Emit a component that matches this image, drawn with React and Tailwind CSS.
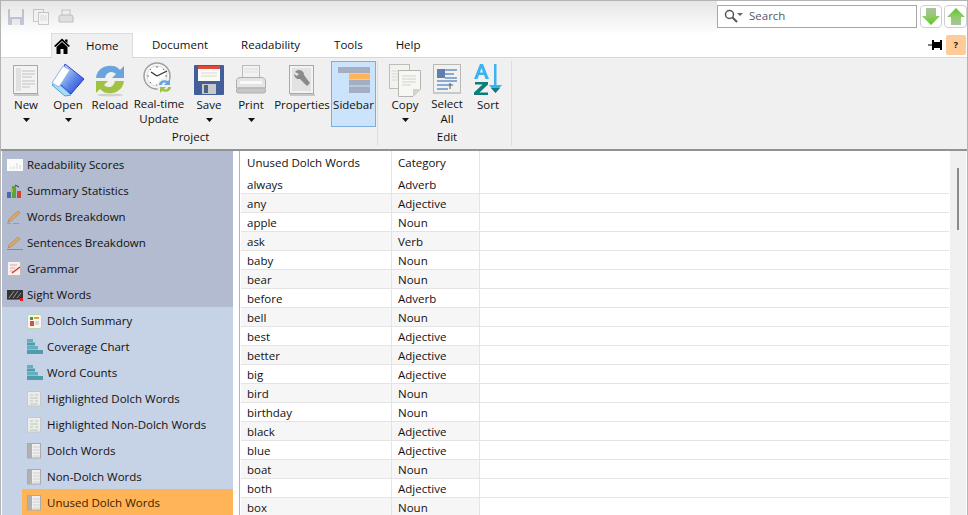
import React from 'react';

const font = { fontFamily: '"Open Sans", "Noto Sans", sans-serif' };

// ribbon icons
const PageIcon = ({ children }) => (
  <svg width="34" height="34" viewBox="0 0 34 34">
    <rect x="4.5" y="2.5" width="24" height="28" fill="#f3f3f1" stroke="#a9a9a5" />
    <rect x="5" y="31" width="25" height="2" fill="#c8c8c8" />
    {children}
  </svg>
);

const NewIcon = () => (
  <PageIcon>
    <rect x="7" y="5" width="5" height="23" fill="#e0e0e0" />
    <path d="M13 8h13M13 11h13M13 14h10M13 18h13M13 21h13M13 24h8" stroke="#dadada" strokeWidth="2" />
  </PageIcon>
);

const OpenIcon = () => (
  <svg width="34" height="34" viewBox="0 0 34 34">
    <defs>
      <linearGradient id="openBlue" x1="0" y1="0" x2="1" y2="1">
        <stop offset="0" stopColor="#e4eefc" />
        <stop offset="0.55" stopColor="#5a86e6" />
        <stop offset="1" stopColor="#1f35d0" />
      </linearGradient>
    </defs>
    <path d="M1 22 L14 33 L20 32 L6 19 Z" fill="#a9dcf5" stroke="#4aa0e0" />
    <path d="M14 1 L33 16 L20 31 L9 21 Z" fill="url(#openBlue)" stroke="#2a3bd0" />
    <path d="M1 20 L12 3 L19 7 L8 24 Z" fill="#fff" stroke="#8ab8ea" />
  </svg>
);

const ReloadIcon = () => (
  <svg width="34" height="34" viewBox="0 0 34 34">
    <path d="M3 15 C4 6 12 2 19 3 C23 3 25 5 27 7 L31 3 V15 H19 L23 11 C19 7 13 9 12 15 Z" fill="#6aa4dc" />
    <path d="M3 18 H15 L11 22 C15 26 21 24 22 18 H31 C30 27 22 31 15 30 C11 30 9 28 7 26 L3 30 Z" fill="#a0c242" />
    <ellipse cx="17" cy="32" rx="13" ry="1.5" fill="#d0d0d0" />
  </svg>
);

const ClockIcon = () => (
  <svg width="34" height="34" viewBox="0 0 34 34">
    <circle cx="15" cy="14" r="13" fill="#f7f7f7" stroke="#a0a0a0" strokeWidth="1.5" />
    <circle cx="15" cy="14" r="10" fill="#fff" stroke="#dadada" />
    <path d="M15 14 L9 10 M15 14 L25 9" stroke="#333" strokeWidth="1.3" />
    <path d="M15 4v2M15 22v2M5 14h2M23 14h2M8 7l1 1M22 7l-1 1M8 21l1-1" stroke="#777" />
    <circle cx="23" cy="24" r="8" fill="#f0f0f0" />
    <path d="M17 23 C17 19 22 17 26 19 L28 17 V23 H22 L24 21 C22 20 20 21 20 23 Z" fill="#6aa4dc" />
    <path d="M29 25 C29 29 24 31 20 29 L18 31 V25 H24 L22 27 C24 28 26 27 26 25 Z" fill="#a0c242" />
  </svg>
);

const SaveIcon = () => (
  <svg width="30" height="30" viewBox="0 0 30 30">
    <rect width="30" height="30" rx="1" fill="#425f9b" />
    <rect x="4" y="1" width="22" height="15" fill="#fbfbf3" />
    <rect x="4" y="1" width="22" height="3" fill="#e04a3c" />
    <path d="M7 8h16M7 11h16" stroke="#d8d8d0" />
    <rect x="8" y="19" width="14" height="10" fill="#c7c9cb" />
    <rect x="10" y="20" width="4" height="8" fill="#4e5f80" />
  </svg>
);

const PrintIcon = () => (
  <svg width="34" height="34" viewBox="0 0 34 34">
    <rect x="8.5" y="2.5" width="17" height="13" fill="#f2f2f2" stroke="#bbb" />
    <path d="M10 6h14M10 9h14" stroke="#dedede" />
    <path d="M2.5 18 Q2.5 14.5 7 14.5 H27 Q31.5 14.5 31.5 18 V25 H2.5 Z" fill="#e4e4e4" stroke="#aeaeae" />
    <rect x="2.5" y="25" width="29" height="5" rx="2" fill="#c6c6c6" stroke="#aeaeae" />
    <rect x="6" y="18" width="22" height="3" fill="#f9f9f9" />
  </svg>
);

const PropertiesIcon = () => (
  <PageIcon>
    <rect x="7" y="5" width="19" height="23" fill="#e2e2e2" />
    <path d="M10 9 A5 5 0 0 1 19 12 L25 20 L22 23 L15 16 A5 5 0 0 1 9 11 L12 13 L14 11 Z" fill="#8a8a8a" />
  </PageIcon>
);

const SidebarIcon = () => (
  <svg width="32" height="26" viewBox="0 0 32 26">
    <rect width="32" height="6" fill="#a4adc2" />
    <rect x="11" y="6.5" width="21" height="6" fill="#ffb557" />
    <rect x="11" y="13" width="21" height="5.5" fill="#a4adc2" />
    <rect x="11" y="19.5" width="21" height="6.5" fill="#a4adc2" />
  </svg>
);

const CopyIcon = () => (
  <svg width="34" height="34" viewBox="0 0 34 34">
    <rect x="1.5" y="1.5" width="20" height="24" fill="#f2f2ee" stroke="#bcbcb8" />
    <path d="M4 8h15M4 11h15M4 14h15M4 17h10" stroke="#dadad6" />
    <path d="M10.5 7.5 H32.5 V26 L25 33.5 H10.5 Z" fill="#f7f7f3" stroke="#b4b4b0" />
    <path d="M25 33 L25 26 H32 Z" fill="#d2d2ce" />
    <path d="M14 13h14M14 16h14M14 19h14M14 22h9" stroke="#cfcfcb" />
  </svg>
);

const SelectAllIcon = () => (
  <svg width="28" height="30" viewBox="0 0 28 30">
    <rect x="0.5" y="0.5" width="27" height="28" fill="#f1f1ee" stroke="#b8b8b4" />
    <rect y="28" width="28" height="2" fill="#c8c8c8" />
    <rect x="4" y="5" width="8" height="9" fill="#5f7fb2" />
    <path d="M12 6h12M12 10h9M12 14h12M4 17h20M4 21h16M4 25h11" stroke="#8ba9d2" strokeWidth="2" />
    <path d="M17 19v6" stroke="#555" />
  </svg>
);

const SortIcon = () => (
  <svg width="30" height="33" viewBox="0 0 30 33">
    <path d="M1 16 L7 1 H10 L16 16 H12.5 L11 12 H6 L4.5 16 Z M7 9.5 H10 L8.5 5 Z" fill="#3cb2f0" fillRule="evenodd" />
    <path d="M2 19 H15 V21.5 L6.5 29.5 H15 V32 H1 V29.5 L9.5 21.5 H2 Z" fill="#0f7c7c" />
    <rect x="21" y="1" width="2.5" height="26" fill="#3cb2f0" />
    <path d="M16 22 H29 L22.5 30 Z" fill="#3cb2f0" />
    <path d="M18 25 H27 L22.5 30 Z" fill="#0f7c7c" />
  </svg>
);

const Caret = () => (
  <svg width="7" height="4" viewBox="0 0 7 4" className="block"><path d="M0 0h7L3.5 4z" fill="#111" /></svg>
);

// sidebar icons
const TableIcon = () => (
  <svg width="16" height="12" viewBox="0 0 16 12">
    <rect width="16" height="12" fill="#fbfbfb" />
    <path d="M3 9h2M7 7v3M10 4v6M13 6v4" stroke="#d4d4d4" />
  </svg>
);
const StatsIcon = () => (
  <svg width="16" height="14" viewBox="0 0 16 14">
    <rect y="8" width="4" height="6" fill="#4a6aa8" />
    <rect x="5" y="2" width="4" height="12" fill="#5da33a" />
    <rect x="10" y="7" width="4" height="7" fill="#d8402a" />
    <path d="M8 1 L12 3" stroke="#333" />
    <rect x="4" y="5" width="2" height="3" fill="#e6a030" />
  </svg>
);
const PencilIcon = ({ wide = false }) => (
  <svg width="16" height="14" viewBox="0 0 16 14">
    <path d="M1 12 L2 9 L11 1 L13 3 L4 11 Z" fill="#e0a860" stroke="#a87838" strokeWidth="0.5" />
    {wide ? <path d="M0 13.5h16" stroke="#8a8a8a" /> : <path d="M0 13.5h4M6 13.5h6" stroke="#9a9a9a" />}
  </svg>
);
const GrammarIcon = () => (
  <svg width="15" height="16" viewBox="0 0 15 16">
    <rect x="0.5" y="0.5" width="13" height="14" fill="#f5f1ee" stroke="#c0bcb8" />
    <rect x="1" y="15" width="14" height="1" fill="#bbb" />
    <path d="M3 4h7M3 7h5M3 10h3" stroke="#d8a8a0" />
    <path d="M5 12 L13 6" stroke="#e03030" strokeWidth="1.5" />
  </svg>
);
const SightIcon = () => (
  <svg width="16" height="11" viewBox="0 0 16 11">
    <rect width="16" height="9" fill="#333" />
    <path d="M2 8 L7 1 M6 8 L11 1 M10 8 L14 3" stroke="#999" />
    <rect y="9" width="16" height="1" fill="#7a6a3a" />
    <rect x="13" y="8" width="3" height="3" fill="#e02020" />
  </svg>
);
const SummaryIcon = () => (
  <svg width="15" height="15" viewBox="0 0 15 15">
    <rect x="0.5" y="0.5" width="14" height="14" rx="2" fill="#f6f8ee" stroke="#bcd4b0" />
    <rect x="3" y="3" width="3" height="3" fill="#3f9a44" />
    <path d="M7 4h5" stroke="#e0a040" strokeWidth="2" />
    <rect x="3" y="7" width="4" height="5" fill="#d85040" />
    <path d="M8 8h4M8 10h4" stroke="#bbb" />
  </svg>
);
const ChartIcon = () => (
  <svg width="16" height="16" viewBox="0 0 16 16">
    <rect width="6" height="3" fill="#63b0bc" />
    <rect y="3.5" width="8" height="3" fill="#4c9eac" />
    <rect y="7" width="11" height="3.5" fill="#63b0bc" />
    <rect y="11" width="16" height="4" fill="#4c9eac" />
  </svg>
);
const HighlightIcon = () => (
  <svg width="14" height="16" viewBox="0 0 14 16">
    <rect x="0.5" y="0.5" width="13" height="14.5" fill="#ececea" stroke="#c8c8c8" />
    <path d="M3 4h3M8 4h3M3 7h8M3 10h3M8 10h3M3 13h8" stroke="#b4ccb4" />
  </svg>
);
const WordsIcon = () => (
  <svg width="14" height="16" viewBox="0 0 14 16">
    <rect x="0.5" y="0.5" width="13" height="14.5" fill="#efefef" stroke="#aaa" />
    <rect x="1" y="1" width="4" height="14" fill="#b0b0b0" />
    <path d="M6 4h7M6 7h7M6 10h7M6 13h7" stroke="#d0d0d0" />
  </svg>
);

const words = [
  ['always', 'Adverb'], ['any', 'Adjective'], ['apple', 'Noun'], ['ask', 'Verb'],
  ['baby', 'Noun'], ['bear', 'Noun'], ['before', 'Adverb'], ['bell', 'Noun'],
  ['best', 'Adjective'], ['better', 'Adjective'], ['big', 'Adjective'], ['bird', 'Noun'],
  ['birthday', 'Noun'], ['black', 'Adjective'], ['blue', 'Adjective'], ['boat', 'Noun'],
  ['both', 'Adjective'], ['box', 'Noun'],
];

const topItems = [
  ['Readability Scores', <TableIcon />],
  ['Summary Statistics', <StatsIcon />],
  ['Words Breakdown', <PencilIcon />],
  ['Sentences Breakdown', <PencilIcon wide />],
  ['Grammar', <GrammarIcon />],
  ['Sight Words', <SightIcon />],
];

const subItems = [
  ['Dolch Summary', <SummaryIcon />],
  ['Coverage Chart', <ChartIcon />],
  ['Word Counts', <ChartIcon />],
  ['Highlighted Dolch Words', <HighlightIcon />],
  ['Highlighted Non-Dolch Words', <HighlightIcon />],
  ['Dolch Words', <WordsIcon />],
  ['Non-Dolch Words', <WordsIcon />],
  ['Unused Dolch Words', <WordsIcon />],
];

function RibbonButton({ icon, label, caret, active, w }) {
  return (
    <div className={`${w} h-[66px] shrink-0 flex flex-col items-center border ${active ? 'bg-[#cce4fb] border-[#7aaede]' : 'border-transparent'}`}>
      <div className="h-[35px] flex items-center justify-center">{icon}</div>
      <div className="text-center leading-[15px] whitespace-pre">{label}</div>
      {caret && <div className="mt-[6px]"><Caret /></div>}
    </div>
  );
}

function SideRow({ icon, label, selected }) {
  return (
    <div className={`h-[26px] flex items-center pl-[5px] pt-[2px] ${selected ? 'bg-[#ffb557] text-[#3a1a00]' : ''}`}>
      <div className="w-[20px] flex justify-start items-center">{icon}</div>
      <span>{label}</span>
    </div>
  );
}

export default function App() {
  return (
    <div style={font} className="w-[968px] h-[515px] overflow-hidden flex flex-col bg-white text-[11.5px] text-[#111] border-x border-t border-[#b4b4b4]">
      {/* quick access + search */}
      <div className="h-[32px] shrink-0 flex">
        <div className="w-[716px] h-[32px] bg-gradient-to-b from-[#e6e6e6] to-[#fdfdfd] flex items-center gap-[9px] pl-[7px]">
          <div className="opacity-30 flex"><svg width="16" height="16" viewBox="0 0 16 16"><rect width="16" height="16" rx="1" fill="#44609a" /><rect x="2" width="12" height="8" fill="#fbe9e6" /><rect x="4" y="10" width="8" height="6" fill="#d0d0d0" /></svg></div>
          <div className="opacity-40 flex"><svg width="16" height="16" viewBox="0 0 16 16"><rect x="0.5" y="0.5" width="10" height="12" fill="#f4f4f4" stroke="#888" /><rect x="5.5" y="3.5" width="10" height="12" fill="#f8f8f8" stroke="#888" /><path d="M7 7h7M7 9h7M7 11h7" stroke="#bbb" /></svg></div>
          <div className="opacity-50 flex"><svg width="16" height="16" viewBox="0 0 16 16"><rect x="4" y="1" width="8" height="6" fill="#eee" stroke="#999" /><path d="M1 8 Q1 6 3 6 H13 Q15 6 15 8 V13 H1 Z" fill="#ccc" stroke="#888" /></svg></div>
        </div>
        <div className="flex gap-[2px] pt-[4px] h-[27px] box-content">
          <div className="w-[200px] h-[23px] border border-[#a6a6a6] flex items-center pl-[6px] pb-[1px]">
            <svg width="20" height="14" viewBox="0 0 20 14" className="mr-[5px]">
              <circle cx="5.5" cy="5.5" r="4" fill="none" stroke="#555" strokeWidth="1.5" />
              <path d="M8.5 8.5 L13 13" stroke="#555" strokeWidth="2" />
              <path d="M13 4h6l-3 3z" fill="#666" />
            </svg>
            <span className="text-[#555a6a]">Search</span>
          </div>
          <div className="w-[22px] h-[23px] border border-[#cfcfcf] rounded-[4px] ml-[1px] flex items-center justify-center">
            <svg width="18" height="19" viewBox="0 0 18 19">
              <defs>
                <linearGradient id="arrowDown" x1="0" y1="0" x2="0" y2="1">
                  <stop offset="0" stopColor="#a9c59c" />
                  <stop offset="0.5" stopColor="#8fcb6c" />
                  <stop offset="1" stopColor="#58c81a" />
                </linearGradient>
              </defs>
              <path d="M4 1 H14 V9 H18 L9 18 L0 9 H4 Z" fill="url(#arrowDown)" />
            </svg>
          </div>
          <div className="w-[23px] h-[23px] border border-[#cfcfcf] rounded-[4px] flex items-center justify-center">
            <svg width="18" height="19" viewBox="0 0 18 19">
              <defs>
                <linearGradient id="arrowUp" x1="0" y1="0" x2="0" y2="1">
                  <stop offset="0" stopColor="#58c81a" />
                  <stop offset="0.5" stopColor="#8fcb6c" />
                  <stop offset="1" stopColor="#a9c59c" />
                </linearGradient>
              </defs>
              <path d="M9 1 L18 10 H14 V18 H4 V10 H0 Z" fill="url(#arrowUp)" />
            </svg>
          </div>
        </div>
      </div>

      {/* tabs */}
      <div className="h-[25px] shrink-0 flex items-stretch border-b border-[#d8d8d8]">
        <div className="w-[50px]" />
        <div className="w-[82px] h-[25px] bg-[#f0f0f0] border-x border-t border-[#dcdcdc] flex items-center">
          <svg width="16" height="16" viewBox="0 0 16 16" className="ml-[2px]">
            <path d="M8 0.5 L16 8 L14.5 9 L8 3 L1.5 9 L0 8 Z M2.5 9 L8 4 L13.5 9 V16 H9.5 V11 H6.5 V16 H2.5 Z M11 1.5 H13.5 V5 L11 3 Z" fill="#000" fillRule="evenodd" />
          </svg>
          <span className="ml-[16px]">Home</span>
        </div>
        <div className="flex items-center">
          <span className="ml-[19px]">Document</span>
          <span className="ml-[33px]">Readability</span>
          <span className="ml-[34px]">Tools</span>
          <span className="ml-[33px]">Help</span>
        </div>
        <div className="ml-auto flex items-center gap-[4px] pr-[1px]">
          <svg width="14" height="12" viewBox="0 0 14 12">
            <path d="M0 6h4" stroke="#000" />
            <path d="M4 1h2v2h6V1h2v10h-2V9H6v2H4z" fill="#000" />
          </svg>
          <div className="w-[20px] h-[20px] bg-[#ffcc99] rounded-[2px] flex items-center justify-center text-[9px] font-bold">?</div>
        </div>
      </div>

      {/* ribbon */}
      <div className="h-[91px] shrink-0 bg-[#f0f0f0] flex pt-[3px] pl-[9px]">
        <div className="w-[368px] h-[85px] flex flex-col border-r border-[#dedede] shrink-0">
          <div className="flex h-[66px]">
            <RibbonButton w="w-[32px]" icon={<NewIcon />} label="New" caret />
            <RibbonButton w="w-[40px] ml-[6px]" icon={<OpenIcon />} label="Open" caret />
            <RibbonButton w="w-[40px] ml-[2px]" icon={<ReloadIcon />} label="Reload" />
            <RibbonButton w="w-[52px] ml-[3px]" icon={<ClockIcon />} label={'Real-time\nUpdate'} />
            <RibbonButton w="w-[40px] ml-[4px]" icon={<SaveIcon />} label="Save" caret />
            <RibbonButton w="w-[40px] ml-[2px]" icon={<PrintIcon />} label="Print" caret />
            <RibbonButton w="w-[54px] ml-[4px]" icon={<PropertiesIcon />} label="Properties" />
            <RibbonButton w="w-[45px] ml-[2px]" active icon={<SidebarIcon />} label="Sidebar" />
          </div>
          <div className="text-center leading-[15px] mt-[2px] pr-[6px]">Project</div>
        </div>
        <div className="w-[134px] h-[85px] flex flex-col border-r border-[#dedede] shrink-0 pl-[7px]">
          <div className="flex h-[66px]">
            <RibbonButton w="w-[40px]" icon={<CopyIcon />} label="Copy" caret />
            <RibbonButton w="w-[36px] ml-[4px]" icon={<SelectAllIcon />} label={'Select\nAll'} />
            <RibbonButton w="w-[36px] ml-[5px]" icon={<SortIcon />} label="Sort" />
          </div>
          <div className="text-center leading-[15px] mt-[2px] pr-[2px]">Edit</div>
        </div>
      </div>

      {/* main */}
      <div className="flex-1 min-h-0 flex border-t-2 border-[#8f9396]">
        <div className="w-[238px] shrink-0 pl-[1px]">
          <div className="w-[231px] bg-[#b2bbcf]">
            {topItems.map(([label, icon]) => (
              <SideRow key={label} label={label} icon={icon} />
            ))}
            <div className="bg-[#c6d2e6] pl-[20px]">
              {subItems.map(([label, icon]) => (
                <SideRow key={label} label={label} icon={icon} selected={label === 'Unused Dolch Words'} />
              ))}
            </div>
          </div>
        </div>
        <div className="flex-1 min-w-0 flex border-l border-[#b4b4b4] pl-[1px] pr-[1px]">
          <div className="flex-1 min-w-0">
            <div className="h-[24px] flex">
              <div className="w-[151px] pl-[6px] flex items-center border-r border-[#e4e4e4]">Unused Dolch Words</div>
              <div className="w-[88px] pl-[6px] flex items-center border-r border-[#e4e4e4]">Category</div>
            </div>
            {words.map(([word, category], i) => (
              <div key={word} className="h-[19px] flex border-b border-[#e4e4e4] mr-[1px]">
                <div className={`w-[151px] pl-[6px] pt-[2px] flex items-center border-r border-[#e4e4e4] ${i % 2 ? 'bg-[#f6f6f6]' : ''}`}>{word}</div>
                <div className={`w-[87px] pl-[6px] pt-[2px] flex items-center ${i % 2 ? 'bg-[#f6f6f6]' : ''}`}>{category}</div>
                <div className="w-px bg-[#e4e4e4]" />
              </div>
            ))}
          </div>
          <div className="w-[16px] shrink-0 bg-[#f0f0f0] pt-[17px] pl-[7px]">
            <div className="w-[2px] h-[62px] bg-[#8a8a8a]" />
          </div>
        </div>
      </div>
    </div>
  );
}
